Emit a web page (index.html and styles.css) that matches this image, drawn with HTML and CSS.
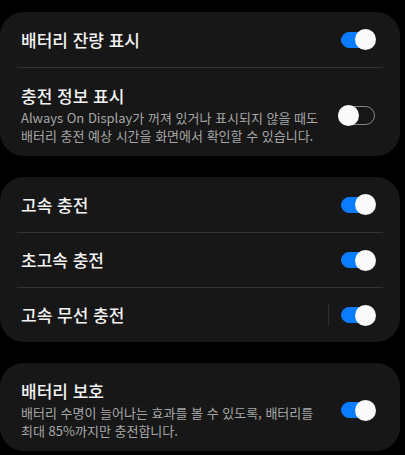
FILE: index.html
```html
<!DOCTYPE html>
<html lang="ko">
<head>
    <meta charset="utf-8">
    <title>배터리 설정</title>
    <link rel="stylesheet" href="styles.css">
</head>
<body>
    <div class="page">
        <div class="card">
            <div class="row">
                <div class="text"><div class="title">배터리 잔량 표시</div></div>
                <span class="switch on"></span>
            </div>
            <div class="row tall">
                <div class="text">
                    <div class="title">충전 정보 표시</div>
                    <div class="desc">Always On Display가 꺼져 있거나 표시되지 않을 때도<br>배터리 충전 예상 시간을 화면에서 확인할 수 있습니다.</div>
                </div>
                <span class="switch"></span>
            </div>
        </div>

        <div class="card">
            <div class="row">
                <div class="text"><div class="title">고속 충전</div></div>
                <span class="switch on"></span>
            </div>
            <div class="row">
                <div class="text"><div class="title">초고속 충전</div></div>
                <span class="switch on"></span>
            </div>
            <div class="row">
                <div class="text"><div class="title">고속 무선 충전</div></div>
                <span class="split"></span>
                <span class="switch on"></span>
            </div>
        </div>

        <div class="card">
            <div class="row tall">
                <div class="text">
                    <div class="title">배터리 보호</div>
                    <div class="desc">배터리 수명이 늘어나는 효과를 볼 수 있도록, 배터리를<br>최대 85%까지만 충전합니다.</div>
                </div>
                <span class="switch on"></span>
            </div>
        </div>
    </div>
</body>
</html>
```

FILE: styles.css
```css
body { margin: 0; background: #000; font-family: "Noto Sans CJK KR", "Noto Sans", sans-serif; color: #f2f2f2; }
.page { width: 400px; padding-top: 12px; display: flex; flex-direction: column; gap: 21px; }
.card { background: #171717; border-radius: 24px; padding: 0 17px; }
.row { display: flex; align-items: center; min-height: 55px; }
.row + .row { border-top: 1px solid #333; min-height: 54px; }
.row.tall { padding: 17px 0 11px; min-height: 0; }
.text { flex: 1; padding-left: 4px; }
.title { font-size: 17px; font-weight: 500; line-height: 22px; }
.desc { font-size: 13px; color: #a6a6a6; line-height: 18px; margin-top: 2px; }
.split { width: 1px; height: 22px; background: #2e2e2e; margin-right: 12px; }
.switch { width: 37px; height: 19px; border-radius: 10px; border: 1.5px solid #8a8a8a; position: relative; margin-right: 8px; box-sizing: border-box; }
.switch::after { content: ""; position: absolute; left: -1px; top: 50%; width: 21px; height: 21px; margin-top: -10.5px; border-radius: 50%; background: #fafafa; }
.switch.on { width: 33px; height: 16px; margin-right: 9px; background: #0a7cff; border-color: #0a7cff; }
.switch.on::after { left: auto; right: -3px; }
```
